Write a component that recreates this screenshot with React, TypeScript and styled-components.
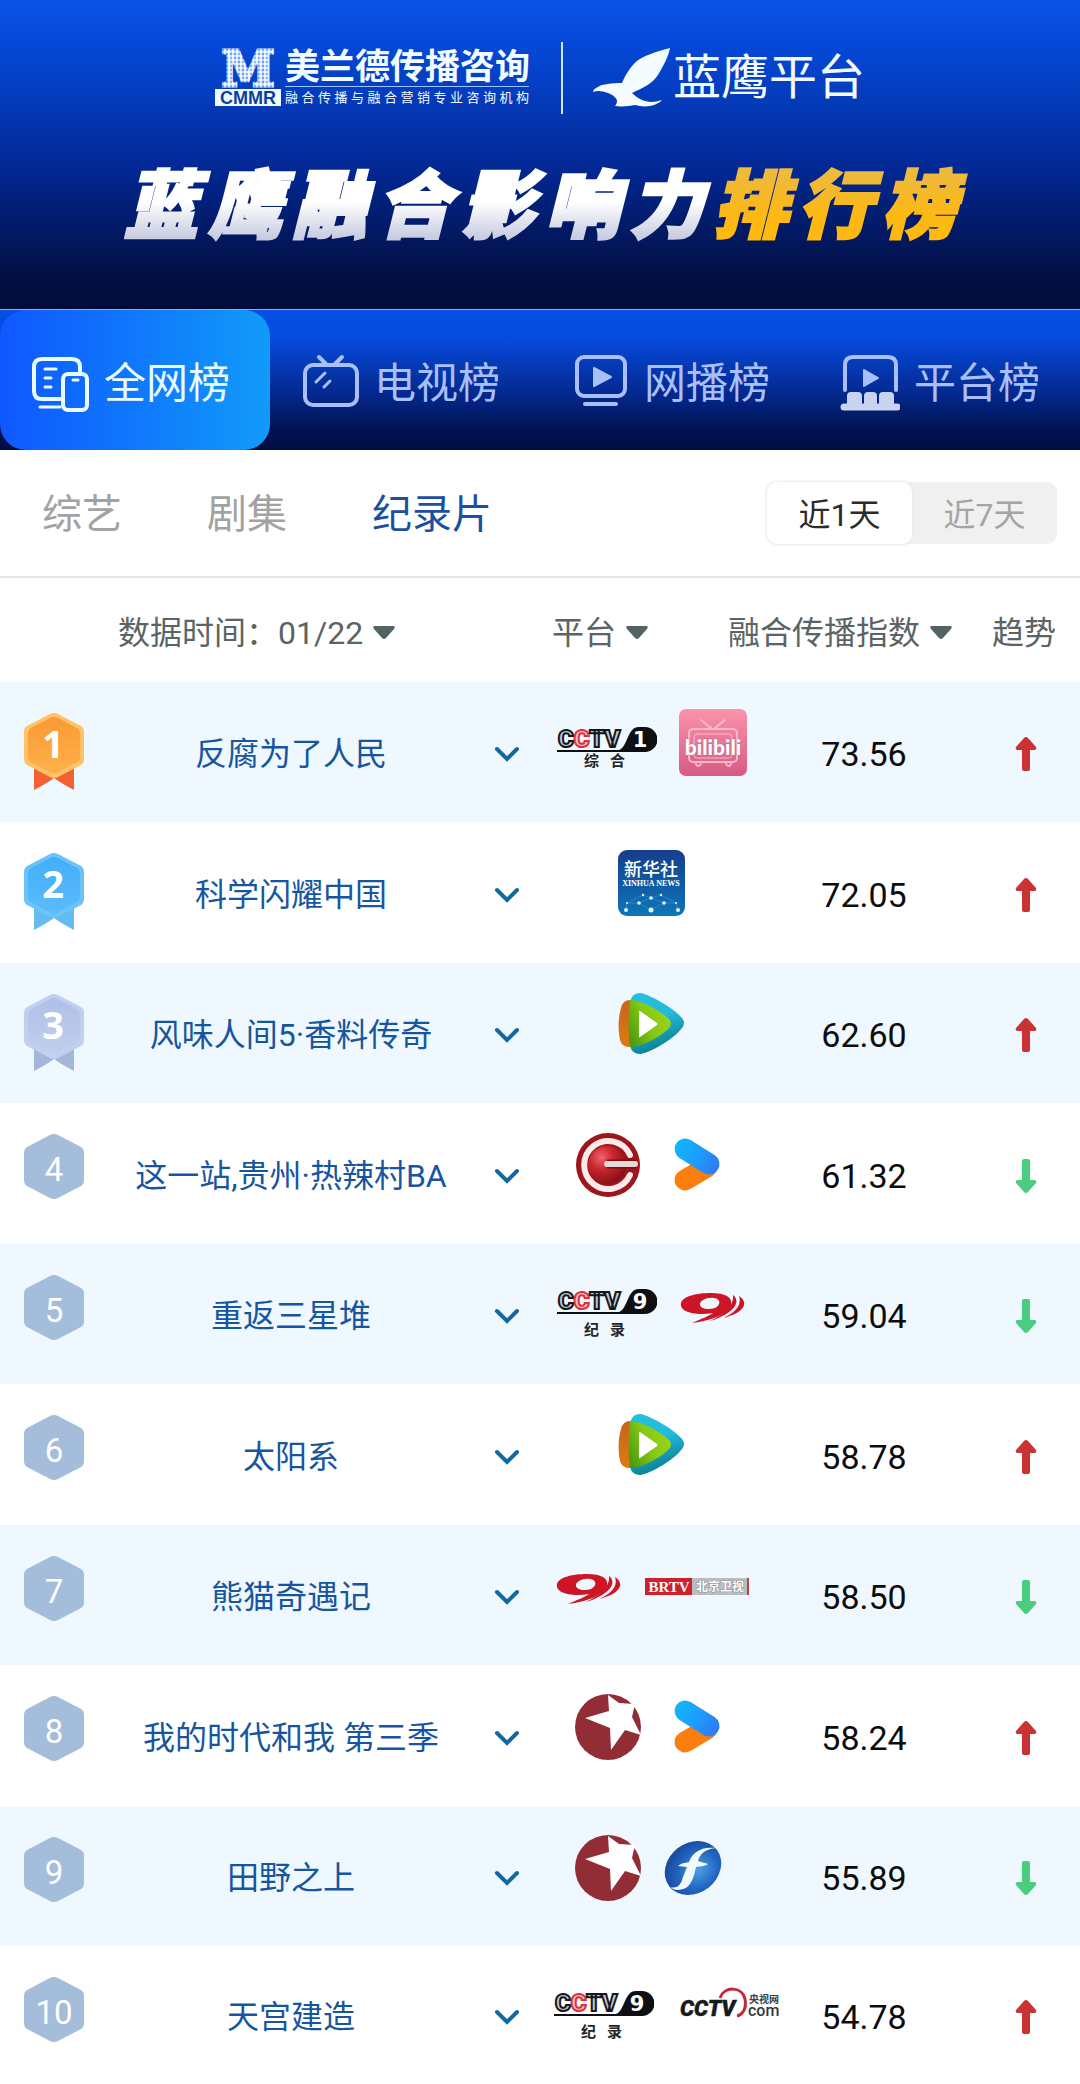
import React, { useState } from "react";
import styled, { createGlobalStyle, css } from "styled-components";

const sans = `Roboto, "Noto Sans CJK SC", sans-serif`;

const GlobalStyle = createGlobalStyle`
  *, *::before, *::after { box-sizing: border-box; }
  body { margin: 0; background: #fff; font-family: ${sans}; }
  button { font: inherit; color: inherit; background: none; border: 0; padding: 0; margin: 0; cursor: pointer; }
  svg { display: block; flex: none; }
`;

const Page = styled.main`
  width: 100%;
  overflow: hidden;
`;

/* ---------- banner ---------- */

const Banner = styled.header`
  display: flex;
  flex-direction: column;
  align-items: center;
  gap: 55px;
  padding: 42px 24px 64px;
  background: linear-gradient(180deg, #0a52e6 0%, #0549d8 14%, #0438b4 36%, #032791 56%, #021a66 74%, #020e42 90%, #020c3a 100%);
`;

const BrandRow = styled.div`
  display: flex;
  align-items: center;
  height: 72px;
  color: #f2fbff;
`;

const Cmmr = styled.div`
  display: flex;
  align-items: center;
  gap: 4px;
`;

const CmmrText = styled.div`
  display: flex;
  flex-direction: column;
  justify-content: space-between;
  width: 244px;
  height: 56px;
`;

const CmmrName = styled.strong`
  font-size: 35px;
  line-height: 36px;
  font-weight: 700;
  border-bottom: 1px solid #9fc3ff;
  white-space: nowrap;
`;

const CmmrSlogan = styled.span`
  font-size: 13px;
  line-height: 16px;
  text-align: justify;
  text-align-last: justify;
`;

const BrandDivider = styled.span`
  width: 2px;
  height: 72px;
  margin: 0 30px 0 32px;
  background: #cfe2ff;
`;

const Eagle = styled.div`
  display: flex;
  align-items: center;
  gap: 2px;
  font-size: 48px;
  line-height: 60px;
  font-weight: 400;
`;

const Title = styled.h1`
  width: 100%;
  max-width: 832px;
  margin: 0;
  font-size: 74px;
  line-height: 76px;
  font-weight: 900;
  font-style: italic;
  text-align: justify;
  text-align-last: justify;
  white-space: nowrap;
`;

const TitlePart = styled.span<{ $gold?: boolean }>`
  margin-right: -16px;
  padding-right: 16px;
  color: transparent;
  -webkit-text-stroke: 3px transparent;
  background: ${(p) =>
    p.$gold
      ? "linear-gradient(180deg, #efb93a 15%, #fdb813 60%, #ffb90f 90%)"
      : "linear-gradient(180deg, #ffffff 45%, #c9cde0 85%)"};
  background-clip: text;
  -webkit-background-clip: text;
`;

/* ---------- main tabs ---------- */

const Tabs = styled.nav`
  display: grid;
  grid-template-columns: repeat(4, 1fr);
  height: 141px;
  border-top: 1px solid #86aef5;
  background: linear-gradient(180deg, #0650e6 0%, #0549dc 22%, #0539b4 40%, #03278a 62%, #021558 82%, #020c40 100%);
`;

const Tab = styled.button<{ $active: boolean }>`
  display: flex;
  align-items: center;
  gap: 14px;
  padding: 8px 0 0 30px;
  font-size: 42px;
  line-height: 60px;
  color: #a9bff7;
  white-space: nowrap;
  ${(p) =>
    p.$active &&
    css`
      color: #e9fcff;
      border-radius: 26px;
      background: linear-gradient(90deg, #0f58ff 0%, #1078fc 50%, #119bfa 100%);
    `}
`;

/* ---------- category bar ---------- */

const FilterBar = styled.div`
  display: flex;
  align-items: center;
  justify-content: space-between;
  height: 128px;
  padding: 0 23px 0 42px;
  border-bottom: 2px solid #e4e4e4;
`;

const Categories = styled.div`
  display: flex;
  gap: 85px;
  padding-top: 4px;
`;

const Category = styled.button<{ $active: boolean }>`
  font-size: 40px;
  line-height: 56px;
  color: ${(p) => (p.$active ? "#1c4f9f" : "#a2a2a2")};
`;

const Range = styled.div`
  display: flex;
  border-radius: 10px;
  background: #f0f0f0;
`;

const RangeButton = styled.button<{ $active: boolean }>`
  width: 145px;
  height: 62px;
  padding-top: 4px;
  border-radius: 10px;
  font-size: 32px;
  line-height: 58px;
  color: ${(p) => (p.$active ? "#2b2b2b" : "#a4a4a4")};
  background: ${(p) => (p.$active ? "#fff" : "transparent")};
  box-shadow: ${(p) => (p.$active ? "0 0 3px 1px #e9e9e9" : "none")};
`;

/* ---------- ranking table ---------- */

const Table = styled.table`
  width: 100%;
  table-layout: fixed;
  border-collapse: collapse;
`;

const Col = styled.col<{ $w?: number }>`
  ${(p) => p.$w && `width: ${p.$w}px;`}
`;

const HeadCell = styled.th<{ $indent?: number }>`
  height: 104px;
  padding: 6px 0 0 ${(p) => p.$indent ?? 0}px;
  text-align: left;
  font-weight: 400;
  font-size: 32px;
  line-height: 44px;
  color: #5b6464;
  white-space: nowrap;
`;

const SortButton = styled.button`
  display: flex;
  align-items: center;
  gap: 10px;
`;

const Row = styled.tr`
  height: 141px;
  &:nth-child(odd) {
    height: 140px;
    background: #eff8fe;
  }
  &:last-child {
    height: 138px;
  }
`;

const Cell = styled.td`
  padding: 4px 0 0;
`;

const RankCell = styled(Cell)`
  padding: 30px 0 0 23px;
  vertical-align: top;
`;

const NameCell = styled(Cell)`
  text-align: center;
  font-size: 32px;
  line-height: 44px;
  color: #17569f;
  white-space: nowrap;
`;

const ExpandCell = styled(Cell)`
  text-align: center;
`;

const ExpandButton = styled.button<{ $open: boolean }>`
  padding: 12px;
  vertical-align: middle;
  transform: ${(p) => (p.$open ? "rotate(180deg)" : "none")};
`;

const PlatformCell = styled(Cell)`
  padding: 27px 14px 0;
  vertical-align: top;
`;

const Platforms = styled.div`
  display: flex;
  justify-content: safe center;
  gap: 22px;
  height: 68px;
`;

const ScoreCell = styled(Cell)`
  text-align: center;
  font-size: 34px;
  line-height: 44px;
  color: #0c0c0c;
`;

const TrendCell = styled(Cell)`
  padding-left: 50px;
`;

/* ---------- drawings ---------- */

const CmmrLogo = () => (
  <svg width="66" height="76" viewBox="0 -10 66 76" role="img" aria-label="CMMR">
    <defs>
      <pattern id="dots" width="4" height="4" patternUnits="userSpaceOnUse">
        <rect width="4" height="4" fill="#7fb0ff" opacity="0.5" />
        <circle cx="2" cy="2" r="1.9" fill="#f2fbff" />
      </pattern>
    </defs>
    <text x="33" y="36" textAnchor="middle" fontFamily="DejaVu Serif, serif" fontWeight="700" fontSize="48" fill="url(#dots)" stroke="url(#dots)" strokeWidth="3">M</text>
    <rect y="39" width="66" height="17" fill="#eefaff" />
    <text x="33" y="54" textAnchor="middle" fontFamily="Liberation Sans, sans-serif" fontWeight="700" fontSize="18" fill="#0a3f9f">CMMR</text>
  </svg>
);

const EagleLogo = () => (
  <svg width="78" height="60" viewBox="0 0 78 60" fill="#f4fcff" aria-hidden="true">
    <path d="M77 0C62 4 50 8 44 13C37 19 33 26 29 35C20 35 8 36 5 39C2 40 0 42 0 44C4 42 10 43 15 45C20 47 24 50 24 53C24 55 23 57 22 58C30 59 36 58 42 57C52 60 64 58 69 52C60 55 54 54 49 52C45 50 42 48 39 45C50 40 60 35 65 27C70 18 75 10 77 0Z" />
  </svg>
);

const iconBox = { width: 60, height: 60, viewBox: "0 0 60 60", fill: "none", stroke: "currentColor", strokeWidth: 4, strokeLinecap: "round" as const, strokeLinejoin: "round" as const };

const AllNetIcon = () => (
  <svg {...iconBox} aria-hidden="true">
    <path d="M30 45H12Q4 45 4 37V13Q4 5 12 5H42Q50 5 50 13V17" />
    <path d="M10 53H30M15 15H26M15 24H21M15 33H21" strokeWidth="3" />
    <rect x="33" y="20" width="24" height="36" rx="5" />
    <path d="M43 26H48" strokeWidth="3" />
  </svg>
);

const TvIcon = () => (
  <svg {...iconBox} aria-hidden="true">
    <rect x="5" y="11" width="52" height="40" rx="8" />
    <path d="M19 3L26 10M42 3L35 10" />
    <path d="M16 28L25 19M24 33L30 27" strokeWidth="3" />
  </svg>
);

const WebcastIcon = () => (
  <svg {...iconBox} aria-hidden="true">
    <rect x="7" y="3" width="48" height="39" rx="7" />
    <path d="M24 14V32L41 23Z" fill="currentColor" strokeWidth="2" />
    <path d="M15 50H46" strokeWidth="4" />
  </svg>
);

const PlatformIcon = () => (
  <svg {...iconBox} aria-hidden="true">
    <path d="M5 36V11Q5 3 13 3H48Q56 3 56 11V36" />
    <path d="M24 16V32L38 24Z" fill="currentColor" strokeWidth="2" />
    <path d="M7 53V42Q7 38 11 38H18Q22 38 22 42V50H24V42Q24 38 28 38H33Q37 38 37 42V50H39V42Q39 38 43 38H50Q54 38 54 42V53Z" fill="#c9d2ee" stroke="none" />
    <path d="M4 53H57" stroke="#c9d2ee" strokeWidth="7" />
  </svg>
);

const Caret = () => (
  <svg width="22" height="14" viewBox="0 0 22 14" fill="#506463" aria-hidden="true">
    <path d="M2 0H20Q23 0 21 3L13 12Q11 14 9 12L1 3Q-1 0 2 0Z" />
  </svg>
);

const Chevron = () => (
  <svg width="26" height="16" viewBox="0 0 26 16" fill="none" stroke="#12699f" strokeWidth="4" strokeLinecap="round" aria-hidden="true">
    <path d="M3 3L13 13L23 3" />
  </svg>
);

const TrendArrow = ({ up }: { up: boolean }) => (
  <svg width="24" height="36" viewBox="0 0 24 36" role="img" aria-label={up ? "上升" : "下降"}>
    <path
      d="M12 1Q13 1 14 2L22 11Q23 13 21 14H16V33Q16 35 14 35H10Q8 35 8 33V14H3Q1 13 2 11L10 2Q11 1 12 1Z"
      fill={up ? "#cb3234" : "#4bcd7f"}
      transform={up ? undefined : "rotate(180 12 18)"}
    />
  </svg>
);

const medals: Record<number, { rim: string; top: string; bottom: string; ribbon: string }> = {
  1: { rim: "#ffc266", top: "#f99a35", bottom: "#ffb04a", ribbon: "#f4602f" },
  2: { rim: "#6cc3fb", top: "#42aef9", bottom: "#5bbcfb", ribbon: "#62bdec" },
  3: { rim: "#c3cff0", top: "#afbfe6", bottom: "#c2cfee", ribbon: "#a3b7da" },
};

const hexagon = "M27 2Q31 0 35 2L58 14Q61 16 61 20V47Q61 51 58 53L35 65Q31 67 27 65L4 53Q1 51 1 47V20Q1 16 4 14Z";

const RankBadge = ({ rank }: { rank: number }) => {
  const medal = medals[rank];
  if (!medal) {
    return (
      <svg width="62" height="80" viewBox="0 0 62 80">
        <path d={hexagon} fill="#a3bddb" />
        <text x="31" y="48" textAnchor="middle" fontFamily="Roboto, sans-serif" fontSize="33" fill="#fff">{rank}</text>
      </svg>
    );
  }
  return (
    <svg width="62" height="80" viewBox="0 0 62 80">
      <defs>
        <linearGradient id={`medal${rank}`} x1="0" y1="0" x2="0" y2="1">
          <stop offset="0" stopColor={medal.top} />
          <stop offset="1" stopColor={medal.bottom} />
        </linearGradient>
      </defs>
      <path d="M11 54H51V78C44 74 38 71 31 66C24 71 18 74 11 78Z" fill={medal.ribbon} />
      <path d={hexagon} fill={medal.rim} />
      <path d={hexagon} fill={`url(#medal${rank})`} transform="translate(4 4) scale(0.87)" />
      <text x="30" y="46" textAnchor="middle" fontFamily="Open Sans, sans-serif" fontWeight="700" fontSize="38" fill="#fff">{rank}</text>
    </svg>
  );
};

const CctvChannel = ({ num, label, labelY }: { num: string; label: string[]; labelY: number }) => (
  <svg width="100" height="68" viewBox="0 0 100 68" role="img">
    <g fontFamily="Roboto, sans-serif" fontWeight="900" fontSize="24" strokeWidth="2">
      <text x="1" y="38" fill="#c3cad1" stroke="#15181c">
        C<tspan fill="#ffc0c0" stroke="#d9333c">C</tspan>TV
      </text>
    </g>
    <path d="M0 41H62C71 38 70 18 82 18H88A12 12 0 0 1 88 43H0Z" fill="#0d0f12" />
    <text x="83" y="38" textAnchor="middle" fontFamily="DejaVu Sans, sans-serif" fontWeight="700" fontSize="21" fill="#fff">{num}</text>
    <g fontFamily="Noto Sans CJK SC, sans-serif" fontWeight="700" fontSize="15" fill="#22262a">
      <text x="27" y={labelY}>{label[0]}</text>
      <text x="53" y={labelY}>{label[1]}</text>
    </g>
  </svg>
);

const Cctv1 = () => <CctvChannel num="1" label={["综", "合"]} labelY={57} />;
const Cctv9 = () => <CctvChannel num="9" label={["纪", "录"]} labelY={64} />;

const Bilibili = () => (
  <svg width="68" height="68" viewBox="0 0 68 68" role="img">
    <defs>
      <linearGradient id="bili" x1="0" y1="0" x2="0" y2="1">
        <stop offset="0" stopColor="#fb93ab" />
        <stop offset="1" stopColor="#d65a83" />
      </linearGradient>
    </defs>
    <rect width="68" height="67" rx="7" fill="url(#bili)" />
    <g fill="none" stroke="#fbb9ca" strokeWidth="2" strokeLinecap="round">
      <rect x="10" y="20" width="48" height="33" rx="4" />
      <rect x="15" y="25" width="38" height="24" rx="3" strokeWidth="1" />
      <path d="M22 11L32 19M46 11L36 19M17 55Q19 59 22 55M47 55Q50 59 52 55" />
    </g>
    <text x="34" y="46" textAnchor="middle" fontFamily="Lato, sans-serif" fontWeight="900" fontSize="21" fill="#fff" stroke="#b9708a" strokeWidth="1" paintOrder="stroke">bilibili</text>
  </svg>
);

const Xinhua = () => (
  <svg width="68" height="68" viewBox="0 0 68 68" role="img">
    <defs>
      <linearGradient id="xinhua" x1="0" y1="0" x2="0" y2="1">
        <stop offset="0" stopColor="#173d8c" />
        <stop offset="1" stopColor="#0b77b8" />
      </linearGradient>
    </defs>
    <rect y="1" width="67" height="66" rx="9" fill="url(#xinhua)" />
    <text x="33" y="27" textAnchor="middle" fontFamily="Noto Sans CJK SC, sans-serif" fontWeight="500" fontSize="18" fill="#fff">新华社</text>
    <text x="33" y="37" textAnchor="middle" fontFamily="Liberation Serif, serif" fontWeight="700" fontSize="8" fill="#fff">XINHUA NEWS</text>
    <path d="M8 61L9 54L25 46L33 49L43 46L58 54L60 61M9 54L21 54L33 61L46 54L58 54M21 54L33 49L46 54" fill="none" stroke="#4f9fd0" strokeWidth="0.500" />
    <g fill="#e6f8ff">
      <circle cx="8" cy="61" r="2" /><circle cx="33" cy="61" r="2.500" /><circle cx="60" cy="61" r="2" />
      <circle cx="21" cy="54" r="1.800" /><circle cx="46" cy="54" r="1.800" /><circle cx="33" cy="49" r="1.800" />
      <circle cx="9" cy="54" r="1" /><circle cx="58" cy="54" r="1" /><circle cx="25" cy="46" r="1.200" /><circle cx="43" cy="46" r="1.200" />
    </g>
  </svg>
);

const Tencent = () => (
  <svg width="68" height="68" viewBox="0 0 68 68" role="img">
    <defs>
      <linearGradient id="txBlue" x1="0" y1="0" x2="0.300" y2="1">
        <stop offset="0" stopColor="#27bfdd" />
        <stop offset="0.500" stopColor="#22bbdd" />
        <stop offset="1" stopColor="#0b8093" />
      </linearGradient>
      <linearGradient id="txGreen" x1="0" y1="0.800" x2="1" y2="0.300">
        <stop offset="0" stopColor="#4a9a12" />
        <stop offset="0.500" stopColor="#85c813" />
        <stop offset="1" stopColor="#9ed41a" />
      </linearGradient>
      <linearGradient id="txOrange" x1="0" y1="0" x2="0" y2="1">
        <stop offset="0" stopColor="#c9641c" />
        <stop offset="1" stopColor="#dc7a10" />
      </linearGradient>
    </defs>
    <path d="M22 3C32 4 58 20 64 28Q68 33 64 38C56 49 32 63 22 64Q14 64 12 56V12Q14 3 22 3Z" fill="url(#txBlue)" />
    <path d="M14 10Q5 9 3 18C0 28 0 40 2 50Q4 58 14 57Z" fill="url(#txOrange)" />
    <path d="M12 10C24 10 44 22 51 29Q55 33 51 38C44 46 24 57 12 57C10 42 10 26 12 10Z" fill="url(#txGreen)" />
    <path d="M22 21L39 33Q40 34 39 35L22 47Q21 48 21 46V22Q21 20 22 21Z" fill="#fff" />
  </svg>
);

const Guizhou = () => (
  <svg width="68" height="68" viewBox="0 0 68 68" role="img">
    <defs>
      <radialGradient id="ball" cx="0.350" cy="0.300" r="0.800">
        <stop offset="0" stopColor="#f0636a" />
        <stop offset="0.400" stopColor="#c9262d" />
        <stop offset="1" stopColor="#7c0d12" />
      </radialGradient>
    </defs>
    <circle cx="35" cy="35" r="32" fill="#9c161c" />
    <path d="M57 25A24 24 0 1 0 57 45" fill="none" stroke="#fbeaea" strokeWidth="6" strokeLinecap="round" />
    <circle cx="34" cy="35" r="19" fill="url(#ball)" />
    <path d="M34 34H63" stroke="#7c0d12" strokeWidth="9" />
    <path d="M34 34H62" stroke="#e6d6d4" strokeWidth="6" strokeLinecap="round" />
  </svg>
);

const Youku = () => (
  <svg width="68" height="68" viewBox="0 0 68 68" fill="none" strokeWidth="21" strokeLinecap="round" role="img">
    <defs>
      <linearGradient id="yk" gradientUnits="userSpaceOnUse" x1="12" y1="14" x2="56" y2="38">
        <stop offset="0" stopColor="#12b6fb" />
        <stop offset="0.500" stopColor="#1d9dfc" />
        <stop offset="1" stopColor="#2f78f6" />
      </linearGradient>
    </defs>
    <path d="M22 50L44 37" stroke="#fb7f0e" />
    <path d="M22 19L46 34" stroke="url(#yk)" />
  </svg>
);

const Sichuan = () => (
  <svg width="68" height="68" viewBox="0 0 68 68" role="img">
    <g fill="#cd1526">
      <path
        fillRule="evenodd"
        d="M2 32C4 25 18 22 32 22C46 22 54 26 52 34C48 43 32 50 13 52C22 48 30 45 34 42C16 45 0 41 2 32ZM21 34C22 38 30 39 36 37C42 34 42 28 35 27C28 26 20 30 21 34Z"
      />
      <path d="M54 24C63 31 54 43 31 50C47 42 55 34 54 24Z" />
      <path d="M60 25C72 33 62 43 44 47C57 41 63 34 60 25Z" />
    </g>
  </svg>
);

const Brtv = () => (
  <svg width="104" height="68" viewBox="0 0 104 68" role="img">
    <rect y="26" width="104" height="17" fill="#b9bcc0" />
    <rect y="26" width="47" height="17" fill="#d0202b" />
    <rect x="102" y="26" width="2" height="17" fill="#c0404a" />
    <text x="24" y="40" textAnchor="middle" fontFamily="Liberation Serif, serif" fontWeight="700" fontSize="15" fill="#fff">BRTV</text>
    <text x="75" y="39" textAnchor="middle" fontFamily="Noto Sans CJK SC, sans-serif" fontWeight="700" fontSize="12" fill="#fff" stroke="#8b8f94" strokeWidth="1" paintOrder="stroke">北京卫视</text>
  </svg>
);

const RedStar = () => (
  <svg width="68" height="68" viewBox="0 0 68 68" role="img">
    <circle cx="35" cy="35" r="33" fill="#932d35" />
    <path d="M35 3L46 11L62 12L59 25L68 43L52 38L38 58L37 36L12 26L36 19Z" fill="#fff" />
  </svg>
);

const Fengxing = () => (
  <svg width="68" height="68" viewBox="0 0 68 68" role="img">
    <defs>
      <radialGradient id="orb" cx="0.550" cy="0.600" r="0.600">
        <stop offset="0" stopColor="#4aa0e6" />
        <stop offset="0.600" stopColor="#2263bf" />
        <stop offset="1" stopColor="#184a9e" />
      </radialGradient>
    </defs>
    <ellipse cx="30" cy="35" rx="30" ry="25" fill="url(#orb)" transform="rotate(-38 30 35)" />
    <path d="M8 54C14 56 18 52 20 44L24 34L15 33C20 29 24 30 26 29C29 20 38 13 53 15C42 16 37 21 35 28L45 31C41 34 37 33 33 34C31 44 28 54 20 56C14 58 10 57 8 54Z" fill="#f1fbff" />
  </svg>
);

const CctvCom = () => (
  <svg width="104" height="68" viewBox="-4 0 104 68" role="img">
    <path d="M40 25C44 13 62 13 65 26C67 36 62 42 57 43" fill="none" stroke="#c3283a" strokeWidth="3" />
    <text x="0" y="43" fontFamily="Roboto, sans-serif" fontWeight="900" fontStyle="italic" fontSize="22" fill="#17191c" stroke="#17191c" strokeWidth="0.500">CCTV</text>
    <text x="69" y="30" fontFamily="Noto Sans CJK SC, sans-serif" fontWeight="700" fontSize="10" fill="#3c4043">央视网</text>
    <text x="68" y="43" fontFamily="Roboto, sans-serif" fontWeight="500" fontSize="16" fill="#33373a">com</text>
  </svg>
);

/* ---------- data ---------- */

const tabs = [
  { name: "全网榜", Icon: AllNetIcon },
  { name: "电视榜", Icon: TvIcon },
  { name: "网播榜", Icon: WebcastIcon },
  { name: "平台榜", Icon: PlatformIcon },
];

const categories = ["综艺", "剧集", "纪录片"];
const ranges = ["近1天", "近7天"];

const rows: { name: string; score: string; up: boolean; platforms: React.FC[] }[] = [
  { name: "反腐为了人民", score: "73.56", up: true, platforms: [Cctv1, Bilibili] },
  { name: "科学闪耀中国", score: "72.05", up: true, platforms: [Xinhua] },
  { name: "风味人间5·香料传奇", score: "62.60", up: true, platforms: [Tencent] },
  { name: "这一站,贵州·热辣村BA", score: "61.32", up: false, platforms: [Guizhou, Youku] },
  { name: "重返三星堆", score: "59.04", up: false, platforms: [Cctv9, Sichuan] },
  { name: "太阳系", score: "58.78", up: true, platforms: [Tencent] },
  { name: "熊猫奇遇记", score: "58.50", up: false, platforms: [Sichuan, Brtv] },
  { name: "我的时代和我 第三季", score: "58.24", up: true, platforms: [RedStar, Youku] },
  { name: "田野之上", score: "55.89", up: false, platforms: [RedStar, Fengxing] },
  { name: "天宫建造", score: "54.78", up: true, platforms: [Cctv9, CctvCom] },
];

export default function App() {
  const [tab, setTab] = useState(0);
  const [category, setCategory] = useState(2);
  const [range, setRange] = useState(0);
  const [open, setOpen] = useState<number | null>(null);

  return (
    <Page>
      <GlobalStyle />
      <Banner>
        <BrandRow>
          <Cmmr>
            <CmmrLogo />
            <CmmrText>
              <CmmrName>美兰德传播咨询</CmmrName>
              <CmmrSlogan>融合传播与融合营销专业咨询机构</CmmrSlogan>
            </CmmrText>
          </Cmmr>
          <BrandDivider />
          <Eagle>
            <EagleLogo />
            <span>蓝鹰平台</span>
          </Eagle>
        </BrandRow>
        <Title>
          <TitlePart>蓝鹰融合影响力</TitlePart>
          <TitlePart $gold>排行榜</TitlePart>
        </Title>
      </Banner>

      <Tabs>
        {tabs.map(({ name, Icon }, i) => (
          <Tab key={name} $active={i === tab} onClick={() => setTab(i)}>
            <Icon />
            {name}
          </Tab>
        ))}
      </Tabs>

      <FilterBar>
        <Categories>
          {categories.map((name, i) => (
            <Category key={name} $active={i === category} onClick={() => setCategory(i)}>
              {name}
            </Category>
          ))}
        </Categories>
        <Range>
          {ranges.map((name, i) => (
            <RangeButton key={name} $active={i === range} aria-pressed={i === range} onClick={() => setRange(i)}>
              {name}
            </RangeButton>
          ))}
        </Range>
      </FilterBar>

      <Table>
        <colgroup>
          <Col $w={108} />
          <Col />
          <Col $w={66} />
          <Col $w={188} />
          <Col $w={36} />
          <Col $w={200} />
          <Col $w={116} />
        </colgroup>
        <thead>
          <tr>
            <HeadCell colSpan={3} $indent={118}>
              <SortButton>数据时间：01/22<Caret /></SortButton>
            </HeadCell>
            <HeadCell $indent={12}>
              <SortButton>平台<Caret /></SortButton>
            </HeadCell>
            <HeadCell colSpan={2}>
              <SortButton>融合传播指数<Caret /></SortButton>
            </HeadCell>
            <HeadCell $indent={28}>趋势</HeadCell>
          </tr>
        </thead>
        <tbody>
          {rows.map((row, i) => (
            <Row key={row.name}>
              <RankCell>
                <RankBadge rank={i + 1} />
              </RankCell>
              <NameCell>{row.name}</NameCell>
              <ExpandCell>
                <ExpandButton
                  $open={open === i}
                  aria-label={`展开 ${row.name}`}
                  aria-expanded={open === i}
                  onClick={() => setOpen(open === i ? null : i)}
                >
                  <Chevron />
                </ExpandButton>
              </ExpandCell>
              <PlatformCell colSpan={2}>
                <Platforms>
                  {row.platforms.map((Logo, n) => (
                    <Logo key={n} />
                  ))}
                </Platforms>
              </PlatformCell>
              <ScoreCell>{row.score}</ScoreCell>
              <TrendCell>
                <TrendArrow up={row.up} />
              </TrendCell>
            </Row>
          ))}
        </tbody>
      </Table>
    </Page>
  );
}
